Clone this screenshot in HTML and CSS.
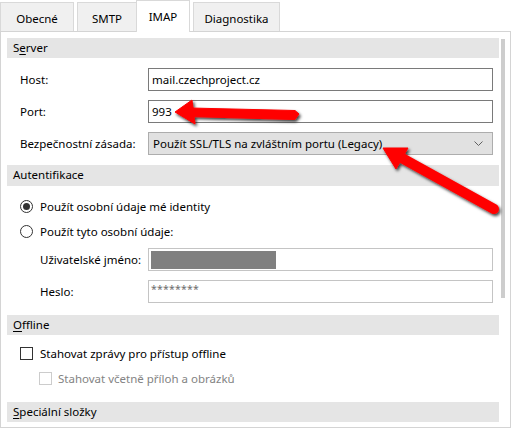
FILE: index.html
```html
<!DOCTYPE html>
<html lang="cs">
<head>
<meta charset="utf-8">
<link rel="stylesheet" href="styles.css">
</head>
<body>
<div class="tabs">
  <div class="tab t1">Obecné</div>
  <div class="tab t2">SMTP</div>
  <div class="tab t3 active">IMAP</div>
  <div class="tab t4">Diagnostika</div>
</div>
<div class="panel">
  <div class="content">
    <div class="hdr">S<u>e</u>rver</div>
    <div class="row r-first"><span class="lbl">Host:</span><div class="input">mail.czechproject.cz</div></div>
    <div class="row"><span class="lbl">Port:</span><div class="input">993</div></div>
    <div class="row"><span class="lbl">Bezpečnostní zásada:</span>
      <div class="select"><span>Použít SSL/TLS na zvláštním portu (Legacy)</span>
        <svg class="chev" width="9" height="5" viewBox="0 0 9 5"><path d="M0.5 0.5 L4.5 4.5 L8.5 0.5" fill="none" stroke="#606060" stroke-width="1"/></svg>
      </div>
    </div>
    <div class="hdr h-auth">Autentifikace</div>
    <div class="opt o-first"><span class="radio on"></span>Použít osobní údaje mé identity</div>
    <div class="opt"><span class="radio"></span>Použít tyto osobní údaje:</div>
    <div class="row r-sub r-user"><span class="lbl">Uživatelské jméno:</span><div class="input light"><span class="redact"></span></div></div>
    <div class="row r-sub"><span class="lbl">Heslo:</span><div class="input light pw">********</div></div>
    <div class="hdr h-off"><u>O</u>ffline</div>
    <div class="opt c-first"><span class="check"></span>Stahovat zprávy pro přístup offline</div>
    <div class="opt sub disabled"><span class="check"></span>Stahovat včetně příloh a obrázků</div>
    <div class="hdr h-spec"><u>S</u>peciální složky</div>
  </div>
  <div class="scrollbar"></div>
</div>
<svg class="arrows" width="511" height="428" viewBox="0 0 511 428">
  <defs>
    <filter id="sh" x="-20%" y="-50%" width="140%" height="200%">
      <feDropShadow dx="1.5" dy="2" stdDeviation="1.6" flood-color="#000" flood-opacity="0.75"/>
    </filter>
  </defs>
  <g filter="url(#sh)" fill="#f00" stroke="#f00">
    <polygon points="190,108 295,110.5 299,114 295,119.5 190,116.5" stroke-width="1" stroke-linejoin="round"/>
    <polygon points="175,112 192,100 195,124" stroke-width="1" stroke-linejoin="round"/>
    <line x1="494" y1="209" x2="400" y2="157" stroke-width="10" stroke-linecap="round"/>
    <polygon points="383,148 408,148 396,169" stroke-width="1" stroke-linejoin="round"/>
  </g>
</svg>
</body>
</html>
```
FILE: styles.css
```css
* { box-sizing: border-box; }
html, body {
  margin: 0;
  padding: 0;
  background: #fff;
  width: 511px;
  height: 428px;
  overflow: hidden;
  font-family: "Noto Sans", "Open Sans", sans-serif;
  font-size: 11.5px;
  color: #000;
}
body { position: relative; }

.tabs {
  display: flex;
  align-items: flex-end;
  height: 31px;
}
.tab {
  height: 29px;
  background: #f0f0f0;
  border: 1px solid #d9d9d9;
  border-bottom: none;
  display: flex;
  align-items: center;
  justify-content: center;
  padding-top: 2px;
}
.t1 { width: 74px; }
.t2 { width: 60px; margin-left: 3px; }
.t3 { width: 54px; margin-left: -1px; }
.t4 { width: 87px; margin-left: 3px; }
.tab.active {
  height: 32px;
  margin-bottom: -1px;
  background: #fff;
  position: relative;
  z-index: 1;
  padding-top: 0;
}

.panel {
  height: 397px;
  border: 1px solid #d4d4d4;
  display: flex;
  align-items: flex-start;
  padding: 6px 4px 0 6px;
}
.content { width: 492px; }
.scrollbar {
  width: 4px;
  height: 259px;
  margin-left: 2px;
  margin-top: 1px;
  background: #cdcdcd;
}

.hdr {
  height: 20px;
  background: #e5e5e5;
  padding-left: 6px;
  line-height: 20px;
}
.hdr u { text-underline-offset: 2px; }
.h-auth { margin-top: 10px; height: 21px; line-height: 20px; }
.h-off { margin-top: 12px; }
.h-spec { margin-top: 11px; }

.row {
  display: grid;
  grid-template-columns: 141px 345px;
  align-items: center;
  margin-top: 9px;
  height: 23px;
}
.r-first { margin-top: 10px; }
.lbl { padding-left: 13px; }
.r-sub .lbl { padding-left: 33px; }
.r-user { margin-top: 4px; }

.input {
  height: 23px;
  border: 1px solid #7a7a7a;
  padding-left: 3px;
  display: flex;
  align-items: center;
  background: #fff;
}
.input.light { border-color: #c4c4c4; padding-left: 2px; }
.redact {
  display: block;
  width: 125px;
  height: 18px;
  background: #808080;
}
.pw {
  align-items: flex-start;
  padding-top: 1px;
  color: #6d6d6d;
  font-size: 10.5px;
  letter-spacing: 0.2px;
}

.select {
  height: 23px;
  border: 1px solid #adadad;
  background: #e1e1e1;
  display: flex;
  align-items: center;
  justify-content: space-between;
  padding: 0 9px 0 4px;
}
.chev { display: block; }

.opt {
  display: flex;
  align-items: center;
  height: 25px;
  padding-left: 13px;
}
.o-first { margin-top: 8px; }
.c-first { margin-top: 6px; }
.opt.sub { padding-left: 32px; }
.disabled { color: #838383; }

.radio {
  width: 13px;
  height: 13px;
  border: 1px solid #333;
  border-radius: 50%;
  margin-right: 7px;
  display: flex;
  align-items: center;
  justify-content: center;
}
.radio.on::after {
  content: "";
  width: 7px;
  height: 7px;
  border-radius: 50%;
  background: #333;
}
.check {
  width: 13px;
  height: 13px;
  border: 1px solid #333;
  margin-right: 7px;
}
.disabled .check { border-color: #cccccc; margin-right: 6px; }

.arrows {
  position: absolute;
  left: 0;
  top: 0;
  pointer-events: none;
}
```
